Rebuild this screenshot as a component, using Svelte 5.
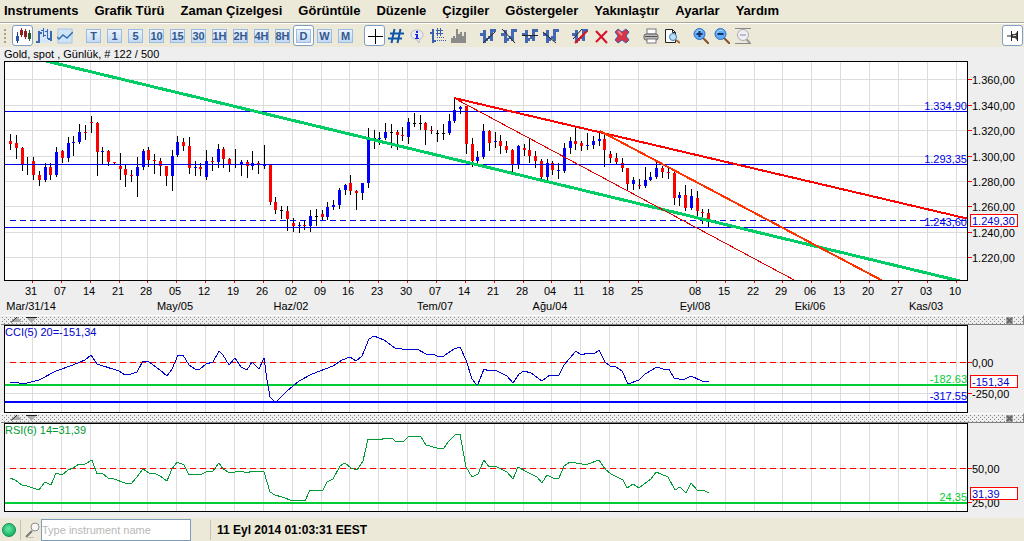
<script lang="ts">
	type Tone = 'up' | 'down' | 'flat';
	type Level = { y: number; text?: string; kind: string };
	type Tick = { y: number; text: string };
	type Trend = { kind: string; from: number[]; to: number[] };

	const menus = [
		'Instruments',
		'Grafik Türü',
		'Zaman Çizelgesi',
		'Görüntüle',
		'Düzenle',
		'Çizgiler',
		'Göstergeler',
		'Yakınlaştır',
		'Ayarlar',
		'Yardım'
	];

	const periods = ['T', '1', '5', '10', '15', '30', '1H', '2H', '4H', '8H', 'D', 'W', 'M'];

	const iconGroups = [
		['cross', 'grid', 'info', 'values', 'volume'],
		['trend', 'ray', 'horizontal', 'extended'],
		['erase', 'delete', 'deleteAll'],
		['print', 'preview'],
		['zoomIn', 'zoomOut', 'zoomReset']
	];

	let chartType = $state('candles');
	let period = $state('D');
	let crosshair = $state(true);
	let search = $state('');

	const weekStep = 28.86;
	const barStep = 5.77;

	// one label per week, an empty one is a week without a grid line
	const weeks = [
		'31', '07', '14', '21', '28', '05', '12', '19', '26', '02', '09',
		'16', '23', '30', '07', '14', '21', '28', '04', '11', '18', '25',
		'', '08', '15', '22', '29', '06', '13', '20', '27', '03', '10'
	]
		.map((label, i) => ({ label, x: Math.round(27 + i * weekStep) }))
		.filter((w) => w.label);

	const months = [
		{ week: 0, label: 'Mar/31/14' },
		{ week: 5, label: 'May/05' },
		{ week: 9, label: 'Haz/02' },
		{ week: 14, label: 'Tem/07' },
		{ week: 18, label: 'Ağu/04' },
		{ week: 23, label: 'Eyl/08' },
		{ week: 27, label: 'Eki/06' },
		{ week: 31, label: 'Kas/03' }
	].map((m) => ({ label: m.label, x: Math.round(27 + m.week * weekStep) }));

	// high, body top, body bottom, low, direction
	const rawCandles = `
		72 79 82 88 r|73 81 86 97 r|85 86 103 109 r|95 102 103 113 k|95 99 113 118 r|109 113 118 124 r
		101 105 118 120 b|101 105 113 118 r|85 90 113 115 b|88 89 96 101 r|75 81 96 100 b|74 80 81 94 b
		62 70 80 82 b|63 70 71 78 r|54 60 61 71 r|60 61 90 114 r|85 89 90 103 b|88 89 100 104 r
		100 100 101 103 r|91 104 107 118 r|102 107 113 125 r|108 113 114 120 r|95 105 114 135 b|87 89 105 108 b
		85 88 98 105 r|92 98 99 112 r|96 99 104 114 r|104 104 114 124 r|88 94 114 129 b|74 80 93 95 b
		76 80 84 89 r|75 84 106 112 r|99 105 106 114 b|101 105 107 114 r|88 99 115 118 b|95 99 100 109 r
		82 87 100 106 b|85 87 97 106 r|96 97 103 110 r|87 102 103 106 k|98 100 103 114 b|98 100 104 116 r
		89 101 104 108 b|99 101 103 112 r|83 102 104 107 b|102 103 140 143 r|135 140 148 152 r|144 148 149 157 k
		144 149 157 169 r|156 161 164 170 r|160 163 164 171 b|159 163 164 168 r|148 154 164 170 b|147 154 155 164 k
		148 152 155 158 r|140 145 155 158 b|138 143 145 148 b|126 128 143 147 b|122 123 128 133 b|113 121 129 133 r
		128 129 131 148 r|121 121 131 138 b|66 76 121 126 b|68 76 77 87 k|70 76 77 83 b|61 70 76 78 b
		62 70 71 86 k|68 70 73 88 r|65 73 74 79 r|56 60 75 82 b|51 61 62 65 k|53 61 62 68 k
		60 61 68 83 r|64 68 69 72 r|68 71 72 80 k|62 71 72 78 k|52 59 71 73 b|35 48 59 61 b
		44 45 47 52 b|44 44 82 92 r|76 82 99 105 r|89 95 99 102 b|62 69 95 97 b|68 69 81 89 r
		70 79 80 86 b|73 79 84 92 r|79 84 88 91 r|87 88 102 111 r|83 84 102 107 b|82 86 88 94 r
		77 88 94 101 r|89 94 99 106 r|97 99 115 119 r|97 101 115 118 b|99 101 108 113 r|101 108 109 117 b
		81 86 109 111 b|75 79 86 92 b|65 79 82 88 r|79 81 84 89 r|71 83 84 88 b|74 79 83 87 b
		69 77 79 84 b|73 77 88 105 r|89 92 96 101 r|91 96 100 103 r|96 101 106 110 r|106 106 122 128 r
		115 118 122 128 b|117 123 124 127 r|105 118 124 126 b|110 115 118 119 b|100 106 115 117 b|104 106 110 116 r
		106 110 111 117 r|110 111 136 143 r|130 133 136 144 b|123 133 146 149 r|127 134 146 148 b|129 136 149 154 r
		147 150 151 162 r|147 151 158 165 r`;

	const tones: Record<string, Tone> = { b: 'up', r: 'down', k: 'flat' };

	const candles = rawCandles
		.trim()
		.split(/\||\n/)
		.map((row, i) => {
			const [high, top, bottom, low, tone] = row.trim().split(' ');
			return {
				x: Math.round(5 + i * barStep),
				high: +high,
				top: +top,
				bottom: +bottom,
				low: +low,
				tone: tones[tone]
			};
		});

	const priceTicks: Tick[] = [
		{ y: 17, text: '1.360,00' },
		{ y: 43, text: '1.340,00' },
		{ y: 68, text: '1.320,00' },
		{ y: 94, text: '1.300,00' },
		{ y: 119, text: '1.280,00' },
		{ y: 144, text: '1.260,00' },
		{ y: 170, text: '1.240,00' },
		{ y: 195, text: '1.220,00' }
	];
	const priceLevels: Level[] = [
		{ y: 49, text: '1.334,90', kind: 'blue' },
		{ y: 102, text: '1.293,35', kind: 'blue' },
		{ y: 158, kind: 'dash-blue' },
		{ y: 165, text: '1.243,60', kind: 'blue' }
	];
	const trends: Trend[] = [
		{ kind: 'support', from: [37, -2], to: [955, 219] },
		{ kind: 'resist', from: [449, 36], to: [964, 157] },
		{ kind: 'thin', from: [449, 36], to: [791, 219] },
		{ kind: 'orange', from: [595, 69], to: [878, 219] }
	];

	const cciTicks: Tick[] = [
		{ y: 36, text: '0,00' },
		{ y: 67, text: '-250,00' }
	];
	const cciLevels: Level[] = [
		{ y: 36, kind: 'dash-red' },
		{ y: 58, text: '-182.63', kind: 'green' },
		{ y: 75, text: '-317.55', kind: 'thick-blue' }
	];
	const cciLine = `5,56 12,56 14,57 22,57 34,54 51,45 68,39 80,34 86,29 92,38 114,45 120,49 126,48 132,46
		138,35 144,36 155,44 162,50 167,43 173,29 178,29 184,39 190,43 195,43 201,38 208,36 214,25 218,29
		224,39 230,32 236,41 242,44 247,36 254,43 259,32 262,54 265,71 269,75 272,75 282,65 294,55 307,48
		315,45 328,40 337,34 345,31 351,35 357,30 364,13 369,10 379,14 390,22 397,23 412,23 421,28 428,28
		432,30 439,30 443,27 449,23 455,21 461,34 467,53 471,58 473,58 479,43 484,45 490,44 502,50 508,57
		514,48 519,45 526,47 537,55 545,49 554,49 559,39 571,25 576,29 583,27 589,28 594,24 600,36 605,40
		611,41 617,45 623,58 634,54 640,48 652,41 658,43 664,43 669,52 674,53 680,53 686,50 697,55 704,55`;

	const rsiTicks: Tick[] = [
		{ y: 44, text: '50,00' },
		{ y: 78, text: '25,00' }
	];
	const rsiLevels: Level[] = [
		{ y: 44, kind: 'dash-red' },
		{ y: 78, text: '24,35', kind: 'green' }
	];
	const rsiLine = `5,54 10,56 17,61 22,62 34,66 40,58 46,61 51,49 57,51 63,46 68,44 74,40 80,40 87,36 92,50
		97,49 103,54 109,55 120,59 126,60 132,53 138,45 144,49 149,49 155,52 162,57 167,45 172,38 179,41
		184,51 190,50 195,51 201,48 208,47 214,39 218,45 225,49 236,47 242,49 247,47 259,48 265,68 270,71
		277,73 288,77 294,76 300,77 305,66 318,66 322,58 328,55 335,42 340,39 346,44 352,46 358,37 363,15
		376,16 379,14 387,14 390,17 398,18 404,12 416,13 421,21 432,24 439,24 443,18 450,11 455,10 461,43
		467,53 473,50 479,36 484,43 490,42 502,48 508,55 513,43 522,48 532,53 537,59 542,51 548,54 554,54
		559,42 565,38 577,40 583,40 594,36 600,45 606,50 618,56 622,64 628,60 634,64 646,55 651,48 663,53
		670,66 675,63 681,69 686,59 692,66 698,66 704,69`;
</script>

{#snippet icon(name: string)}
	<svg class="icon" viewBox="0 0 16 16" width="16" height="16" aria-hidden="true">
		{#if name === 'candles'}
			<g shape-rendering="crispEdges">
				<rect x="2" y="4" width="1" height="11" fill="#1d3f8f" />
				<rect x="1" y="8" width="3" height="5" fill="#2a56a8" />
				<rect x="5" y="2" width="3" height="5" fill="#8d2020" />
				<rect x="6" y="0" width="1" height="9" fill="#8d2020" />
				<rect x="9" y="3" width="3" height="6" fill="#8d2020" />
				<rect x="10" y="1" width="1" height="10" fill="#8d2020" />
				<rect x="14" y="2" width="1" height="11" fill="#1f5d2e" />
				<rect x="13" y="5" width="3" height="6" fill="#1f5d2e" />
			</g>
		{:else if name === 'bars'}
			<rect x="2" y="1" width="13" height="14" fill="#d3e5f7" />
			<g shape-rendering="crispEdges" fill="#3b67ae">
				<path d="M2 3h2v12H2zM0 13h2v2H0zM4 4h2v2H4zM7 0h1v9H7zM5 2h2v1H5zM8 7h2v1H8zM11 1h1v10h-1zM9 3h2v1H9zM14 3h2v10h-2zM12 10h2v2h-2z" />
			</g>
		{:else if name === 'line'}
			<rect x="1" y="1" width="14" height="14" fill="#cfe3f7" stroke="#a9c6e6" />
			<path d="M0 9l2 2 4-4 4 3 6-6" stroke="#3470b4" stroke-width="1.500" fill="none" />
		{:else if name === 'cross'}
			<path d="M8.500 1v15M1 8.500h15" stroke="#000" fill="none" shape-rendering="crispEdges" />
		{:else if name === 'grid'}
			<path d="M6.500 1L3.500 15M12.500 1L9.500 15M2 5.500h14M0 10.500h14" stroke="#0f57a8" stroke-width="2" fill="none" />
		{:else if name === 'info'}
			<path d="M8 2c4 0 6 2 6 5 0 2-1 3-3 4l-1 4-3-4C4 11 2 9 2 7c0-3 2-5 6-5z" fill="#e9eaf3" stroke="#b9b9bf" />
			<path d="M7 3h2v2H7zM6 6h3v4h1v1H6v-1h1V7H6z" fill="#1d2be0" />
		{:else if name === 'values'}
			<g shape-rendering="crispEdges" fill="#3962ae">
				<path d="M2 1h2v14H2zM0 4h2v2H0zM4 12h2v2H4z" />
				<path d="M7 0h1v8H7zM10 0h1v8h-1zM6 2h7v1H6zM6 5h7v1H6z" />
				<path d="M7 9h1v1H7zM9 9h1v1H9zM11 9h1v1h-1zM13 9h1v1h-1zM7 12h1v1H7zM9 12h1v1H9zM11 12h1v1h-1zM13 12h1v1h-1zM15 12h1v1h-1z" />
			</g>
		{:else if name === 'volume'}
			<path d="M0 15V10h2V8h2v2h1V1h2v5h2V4h2v4h2V4h2v11z" fill="#8b8b8b" />
		{:else if name === 'trend' || name === 'ray' || name === 'horizontal' || name === 'extended' || name === 'erase'}
			<path
				d="M3 2h3v13H3zM0 5h3v3H0zM6 10h2v3H6zM10 1h3v12h-3zM8 8h2v3H8zM13 1h3v3h-3z"
				fill="#4268b2"
				shape-rendering="crispEdges"
			/>
			{#if name === 'trend'}
				<path d="M3 15L15 4" stroke="#222" fill="none" />
			{:else if name === 'ray'}
				<path d="M1 1l13 14" stroke="#222" fill="none" />
			{:else if name === 'horizontal'}
				<path d="M0 7.500h16" stroke="#222" fill="none" />
			{:else if name === 'extended'}
				<path d="M0 4l13 11" stroke="#222" fill="none" />
			{:else}
				<path d="M1 11L10 1" stroke="#222" fill="none" />
				<path d="M3 15L15 3" stroke="#e01020" stroke-width="2" fill="none" />
			{/if}
		{:else if name === 'delete'}
			<path d="M3 3l11 12M14 3L3 14" stroke="#d80f2c" stroke-width="2" fill="none" />
		{:else if name === 'deleteAll'}
			<path d="M1 4l3-3 4 3 4-3 3 3-3 4 3 4-3 3-4-3-4 3-3-3 3-4z" fill="#d63447" stroke="#3f5fae" />
			<path d="M4 3l4 4" stroke="#ee8b90" stroke-width="2" />
		{:else if name === 'print'}
			<rect x="4" y="1" width="9" height="5" fill="#fff" stroke="#777" />
			<rect x="1" y="6" width="14" height="6" rx="2" fill="#b9b9b9" stroke="#666" />
			<path d="M2 8.500h12" stroke="#555" />
			<rect x="4" y="11" width="9" height="4" fill="#fff" stroke="#777" />
		{:else if name === 'preview'}
			<path d="M1.500 1.500h7l3 3v10h-10z" fill="#fff" stroke="#222" />
			<path d="M8.500 1.500v3h3" fill="none" stroke="#222" />
			<path d="M12 12l4 3" stroke="#a06a3a" stroke-width="2" />
			<circle cx="9" cy="9" r="3.500" fill="#bfe2f8" stroke="#3980c0" />
		{:else if name === 'zoomIn' || name === 'zoomOut'}
			<path d="M10 10l6 6" stroke="#86512a" stroke-width="2" />
			<circle cx="6.500" cy="6" r="5.500" fill="#62aaf2" stroke="#2d70c4" />
			<path d="M3 5a4 4 0 0 1 6-2" fill="none" stroke="#b3dcff" />
			<path d={name === 'zoomIn' ? 'M6.500 3v6M3.500 6h6' : 'M3.500 6h6'} stroke="#14356e" stroke-width="2" />
		{:else if name === 'zoomReset'}
			<path d="M0 .5h16M0 15.500h16" stroke="#888" />
			<path d="M11 11l4 4" stroke="#999" stroke-width="2" />
			<circle cx="8" cy="7" r="5.500" fill="#eeeef4" stroke="#aaaab2" />
			<path d="M5 7h6" stroke="#8d8d98" />
		{:else if name === 'pin'}
			<path d="M2 8h4M6.500 3v10M12.500 3v10" stroke="#222" fill="none" />
			<path d="M7 6h3l2-2v8l-2-2H7z" fill="#444" />
			<path d="M8 7.500h3" stroke="#ccc" />
		{:else if name === 'search'}
			<path d="M7 9l-6 6" stroke="#777" stroke-width="2" />
			<path d="M1 15.500h8" stroke="#c5c2b4" />
			<circle cx="10" cy="5" r="4" fill="#f6f6f6" stroke="#8e8e8e" />
		{/if}
	</svg>
{/snippet}

{#snippet plot(size: string, ticks: Tick[], levels: Level[])}
	<svg class="plot {size}">
		{#each ticks as t}
			<rect class="grid" x="0" y={t.y} width="100%" height="1" />
		{/each}
		{#each weeks as w}
			<rect class="grid" x={w.x} y="0" width="1" height="100%" />
		{/each}
		{#if size === 'price'}
			{#each candles as c}
				<rect class="flat" x={c.x} y={c.high} width="1" height={c.low - c.high} />
				<rect class={c.tone} x={c.x - 1} y={c.top} width="3" height={c.bottom - c.top} />
			{/each}
		{/if}
		{#each levels as l}
			<line
				class="level {l.kind}"
				x1={l.kind.startsWith('dash') ? 5 : 0}
				x2="100%"
				y1={l.kind === 'green' || l.kind === 'thick-blue' ? l.y + 1 : l.y + 0.5}
				y2={l.kind === 'green' || l.kind === 'thick-blue' ? l.y + 1 : l.y + 0.5}
			/>
			{#if l.text}
				<text class="level-text {l.kind}" x="100%" y={l.y - 1}>{l.text}</text>
			{/if}
		{/each}
		{#if size === 'price'}
			{#each trends as t}
				<line class="trend {t.kind}" x1={t.from[0]} y1={t.from[1]} x2={t.to[0]} y2={t.to[1]} />
			{/each}
		{:else if size === 'cci'}
			<polyline class="study cci-line" points={cciLine} />
			<text class="cci-name" x="0" y="10">CCI(5) 20=-151,34</text>
		{:else}
			<polyline class="study rsi-line" points={rsiLine} />
			<text class="rsi-name" x="0" y="10">RSI(6) 14=31,39</text>
		{/if}
	</svg>
{/snippet}

{#snippet scale(size: string, ticks: Tick[], value: string, top: number)}
	<svg class="scale {size}">
		{#each ticks as t}
			<rect class="tick" x="0" y={t.y + 1} width="4" height="1" />
			<text x="4" y={t.y + 6}>{t.text}</text>
		{/each}
		<rect class="tick" x="2" y={top} width="48" height="13" />
		<rect class="value-back" x="3" y={top + 1} width="46" height="11" />
		<text class="value" x="4" y={top + 11}>{value}</text>
	</svg>
{/snippet}

{#snippet splitter()}
	<div class="splitter">
		<button class="collapse" aria-label="Collapse">
			<svg viewBox="0 0 11 6" width="11" height="6"><path d="M0 5L6 0l5 5z" fill="#aaa" /><path d="M0 5.500L6 0" stroke="#222" /></svg>
		</button>
		<button class="collapse" aria-label="Expand">
			<svg viewBox="0 0 11 6" width="11" height="6"><path d="M1 1h9L5.500 6z" fill="#aaa" /><path d="M0 .5h11" stroke="#222" /></svg>
		</button>
		<button class="close" aria-label="Close">
			<svg viewBox="0 0 7 7" width="7" height="7">
				<rect width="7" height="7" fill="#aaa" />
				<path d="M1 1l5 5M6 1L1 6" stroke="#666" stroke-width="2" />
			</svg>
		</button>
	</div>
{/snippet}

<div class="app">
	<nav class="menu">
		{#each menus as menu}
			<button>{menu}</button>
		{/each}
	</nav>

	<div class="toolbar">
		<span class="grip"></span>
		<div class="group">
			{#each ['candles', 'bars', 'line'] as type}
				<button
					class="tool"
					class:active={chartType === type}
					aria-label={type}
					onclick={() => (chartType = type)}
				>
					{@render icon(type)}
				</button>
			{/each}
		</div>
		<div class="group">
			{#each periods as p}
				<button class="tool" class:active={period === p} onclick={() => (period = p)}>
					<span class="period">{p}</span>
				</button>
			{/each}
		</div>
		{#each iconGroups as group}
			<div class="group">
				{#each group as name}
					<button
						class="tool"
						class:active={name === 'cross' && crosshair}
						aria-label={name}
						onclick={() => name === 'cross' && (crosshair = !crosshair)}
					>
						{@render icon(name)}
					</button>
				{/each}
			</div>
		{/each}
		<button class="tool active pin" aria-label="pin">{@render icon('pin')}</button>
	</div>

	<main class="charts">
		<div class="title">Gold, spot , Günlük, # 122 / 500</div>
		<section class="row">
			{@render plot('price', priceTicks, priceLevels)}
			{@render scale('price', priceTicks, '1.249,30', 153)}
		</section>
		<svg class="dates">
			{#each weeks as w}
				<rect class="tick" x={w.x + 5} y="0" width="1" height="2" />
				<text x={w.x + 4} y="14">{w.label}</text>
			{/each}
			{#each months as m}
				<text x={m.x + 4} y="29">{m.label}</text>
			{/each}
		</svg>

		{@render splitter()}
		<section class="row">
			{@render plot('cci', cciTicks, cciLevels)}
			{@render scale('cci', cciTicks, '-151,34', 50)}
		</section>

		{@render splitter()}
		<section class="row">
			{@render plot('rsi', rsiTicks, rsiLevels)}
			{@render scale('rsi', rsiTicks, '31,39', 64)}
		</section>
	</main>

	<footer class="status">
		<span class="orb"></span>
		<span class="divider"></span>
		<label class="search">
			{@render icon('search')}
			<input type="text" placeholder="Type instrument name" aria-label="Instrument name" bind:value={search} />
		</label>
		<span class="divider"></span>
		<time>11 Eyl 2014 01:03:31 EEST</time>
	</footer>
</div>

<style>
	:global(body) {
		background: #eeeeee;
	}

	.app {
		display: flex;
		flex-direction: column;
		min-height: 100vh;
		font-family: 'Liberation Sans', Arial, sans-serif;
		font-size: 11px;
		color: #000;
	}

	button {
		padding: 0;
		border: none;
		background: none;
		font-family: inherit;
		color: inherit;
	}

	.menu {
		display: flex;
		gap: 16px;
		height: 22px;
		padding-left: 4px;
		background: #ece9d8;
		border-bottom: 1px solid #aca899;
	}

	.menu button {
		font-size: 13px;
		font-weight: bold;
		line-height: 20px;
		white-space: nowrap;
	}

	.toolbar {
		display: flex;
		align-items: center;
		gap: 8px;
		height: 23px;
		padding-right: 1px;
		background: #ece9d8;
		border-top: 1px solid #fff;
	}

	.grip {
		width: 2px;
		height: 14px;
		margin-left: 4px;
		margin-right: -2px;
		background: repeating-linear-gradient(#a5a295 0 2px, transparent 2px 4px);
	}

	.group {
		display: flex;
	}

	.tool {
		box-sizing: border-box;
		display: flex;
		align-items: center;
		justify-content: center;
		width: 21px;
		height: 21px;
		border: 1px solid transparent;
		border-radius: 3px;
	}

	.tool.active {
		background: #fff;
		border-color: #7d9fc4;
	}

	.pin {
		margin-left: auto;
	}

	.icon {
		flex: none;
		display: block;
	}

	.period {
		box-sizing: border-box;
		display: flex;
		justify-content: center;
		width: 15px;
		height: 14px;
		border: 1px solid #9dbbe0;
		background: linear-gradient(#eaf3fd, #c3daf3);
		font-size: 11px;
		font-weight: bold;
		line-height: 13px;
		color: #34588c;
	}

	.charts {
		flex: 1;
		background: #eeeeee;
		padding-bottom: 6px;
	}

	.title {
		height: 14px;
		padding-left: 4px;
		line-height: 15px;
	}

	.row {
		display: flex;
		padding-left: 4px;
	}

	.price {
		height: 220px;
	}

	.cci {
		height: 88px;
	}

	.rsi {
		height: 89px;
	}

	.plot {
		box-sizing: border-box;
		flex: 1;
		min-width: 0;
		border: 1px solid #000;
		background: #fff;
		overflow: hidden;
		shape-rendering: crispEdges;
	}

	.scale {
		flex: none;
		width: 56px;
	}

	.grid {
		fill: #dcdcdc;
	}

	.flat {
		fill: #000;
	}

	.up {
		fill: #0000ff;
	}

	.down {
		fill: #ff0000;
	}

	.level {
		stroke: #0000e6;
		stroke-width: 1;
	}

	.level.green {
		stroke: #00cc33;
		stroke-width: 2;
	}

	.level.thick-blue {
		stroke: #0000ff;
		stroke-width: 2;
	}

	.level.dash-blue,
	.level.dash-red {
		stroke-dasharray: 6 4;
	}

	.level.dash-red {
		stroke: #ff0000;
	}

	.level-text {
		fill: #0000e6;
		text-anchor: end;
	}

	.level-text.green {
		fill: #00cc33;
	}

	.support {
		stroke: #00cc66;
		stroke-width: 3;
	}

	.resist {
		stroke: #ff0000;
		stroke-width: 2;
	}

	.thin {
		stroke: #e60000;
		stroke-width: 1;
	}

	.orange {
		stroke: #ff3300;
		stroke-width: 2;
	}

	.study {
		fill: none;
		stroke-width: 1;
	}

	.cci-line {
		stroke: #0000cc;
	}

	.rsi-line {
		stroke: #009933;
	}

	.cci-name,
	.value {
		fill: #0000cc;
	}

	.rsi-name {
		fill: #009933;
	}

	.tick {
		fill: #ff0000;
	}

	.value-back {
		fill: #fff;
	}

	.dates {
		display: block;
		width: 100%;
		height: 34px;
		text-anchor: middle;
	}

	.splitter {
		box-sizing: border-box;
		display: flex;
		align-items: center;
		gap: 4px;
		height: 10px;
		margin-left: 1px;
		padding: 0 10px;
		border-top: 1px solid #fff;
		border-right: 1px solid #808080;
		border-bottom: 1px solid #808080;
		background: #eeeeee
			url("data:image/svg+xml,%3Csvg xmlns='http://www.w3.org/2000/svg' width='4' height='4'%3E%3Cpath d='M1 1h1v1H1zM3 3h1v1H3z' fill='%23888'/%3E%3C/svg%3E");
	}

	.splitter svg {
		display: block;
	}

	.close {
		margin-left: auto;
	}

	.status {
		display: flex;
		align-items: center;
		height: 23px;
		background: #ece9d8;
	}

	.orb {
		box-sizing: border-box;
		width: 14px;
		height: 14px;
		margin: 0 4px 0 2px;
		border: 1px solid #0d8a4b;
		border-radius: 50%;
		background: radial-gradient(circle at 45% 40%, #6fe8a8, #17b565 70%);
	}

	.divider {
		width: 1px;
		height: 20px;
		background: #c5c2b4;
	}

	.search {
		display: flex;
		align-items: center;
		margin-left: 4px;
		margin-right: 19px;
	}

	input {
		box-sizing: border-box;
		width: 150px;
		height: 22px;
		padding: 0;
		border: 1px solid #7f9db9;
		background: #fff;
		font-family: inherit;
		font-size: 11px;
	}

	input::placeholder {
		color: #b8b8b8;
		opacity: 1;
	}

	time {
		margin-left: 6px;
		font-size: 12px;
		font-weight: bold;
	}
</style>
